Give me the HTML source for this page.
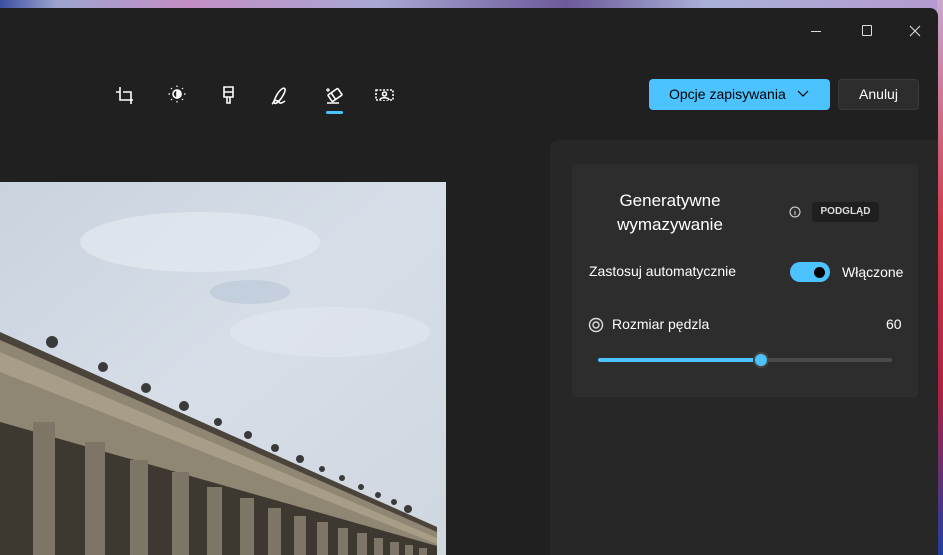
<!DOCTYPE html>
<html><head><meta charset="utf-8"><style>
*{margin:0;padding:0;box-sizing:border-box}
body{width:943px;height:555px;overflow:hidden;position:relative;font-family:"Segoe UI","Liberation Sans",sans-serif;background:#8f8fb8}
.wall{position:absolute;inset:0;background:linear-gradient(90deg,#3c4fa0 0,#9ea4d0 6%,#c38ec4 20%,#a9a8d4 40%,#6d5a9a 60%,#aab1d8 75%,#b49ad0 100%)}
.strip{position:absolute;right:0;top:0;width:6px;height:555px;background:linear-gradient(#c9a8d0,#d23a4a 40%,#b02040 70%,#2040a0)}
.win{position:absolute;left:0;top:8px;width:938px;height:547px;background:#202020;border-top-right-radius:8px;overflow:hidden}
.tb{position:absolute;color:#fff}
.panel{position:absolute;left:550px;top:132px;width:390px;height:420px;background:#272727;border-radius:8px 0 0 0}
.card{position:absolute;left:22px;top:24px;width:346px;height:233px;background:#2d2d2d;border-radius:4px}
.t{position:absolute;color:#fff;font-size:14px}
</style></head><body>
<div class="wall"></div><div class="strip"></div>
<div class="win">
 <div class="tb" style="left:811px;top:23px;width:10px;height:1px;background:#ddd"></div>
 <div class="tb" style="left:862px;top:17px;width:10px;height:11px;border:1px solid #ddd;border-radius:1px"></div>
 <svg class="tb" style="left:909px;top:17px" width="12" height="12"><path d="M1 1L11 11M11 1L1 11" stroke="#ddd" stroke-width="1.1"/></svg>
 <svg style="position:absolute;left:110px;top:74px" width="300" height="40" fill="none" stroke="#fff" stroke-width="1.6">
  <path d="M10 5v13h13M13 10h8v12M6 10h4"/>
  <g transform="translate(67,12)"><circle cx="0" cy="0" r="4"/><path d="M0 -4a4 4 0 0 1 0 8z" fill="#fff"/><path d="M-7 0h-1.5M7 0h1.5M0-7v-1.5M0 7v1.5M-5-5l-1-1M5 5l1 1M5-5l1-1M-5 5l-1 1" stroke-width="1.2"/></g>
  <path d="M114 5h9v10h-9zM114 10h9M117 15v6h3v-6"/>
  <path d="M162 22c2-1 3-7 6-11s6-6 7-4-3 9-6 12-5 3-5 1 4-2 5 0 3 1 6-1"/>
  <g transform="translate(225,13) rotate(-35)"><rect x="-6" y="-4" width="12" height="8" rx="1"/><path d="M-2-4v8"/></g>
  <path d="M217 21h12"/><path d="M218 6v4M216 8h4" stroke-width="1.2"/>
  <path d="M266 8h17v10h-17z" stroke-dasharray="2 1.5"/><circle cx="274.5" cy="12" r="2" fill="#202020"/><path d="M270 18c0-3 9-3 9 0" fill="#202020"/>
 </svg>
 <div style="position:absolute;left:326px;top:103px;width:17px;height:3px;border-radius:2px;background:#4cc2ff"></div>
 <div style="position:absolute;left:649px;top:71px;width:181px;height:31px;background:#4cc2ff;border-radius:4px;color:#000;font-size:14px;line-height:31px;padding-left:20px">Opcje zapisywania
  <svg style="position:absolute;left:148px;top:11px" width="12" height="8"><path d="M1 1l5 5 5-5" stroke="#000" fill="none" stroke-width="1.2"/></svg></div>
 <div style="position:absolute;left:838px;top:71px;width:81px;height:31px;background:#2d2d2d;border:1px solid #3a3a3a;border-radius:4px;color:#fff;font-size:14px;line-height:29px;text-align:center">Anuluj</div>
 <svg style="position:absolute;left:0;top:174px" width="446" height="373">
  <defs><linearGradient id="sky" x1="0" y1="0" x2="1" y2="1"><stop offset="0" stop-color="#c9d3de"/><stop offset=".5" stop-color="#d7dee8"/><stop offset="1" stop-color="#cfd6de"/></linearGradient></defs>
  <rect width="446" height="373" fill="url(#sky)"/>
  <ellipse cx="200" cy="60" rx="120" ry="30" fill="#e4e9f0" opacity=".7"/>
  <ellipse cx="330" cy="150" rx="100" ry="25" fill="#e2e7ee" opacity=".6"/>
  <ellipse cx="250" cy="110" rx="40" ry="12" fill="#b4c2d4" opacity=".5"/>
  <polygon points="0,150 437,345 437,373 0,373" fill="#4a443a"/>
  <polygon points="0,158 437,350 437,366 0,240" fill="#8f8674"/>
  <polygon points="0,170 437,356 437,362 0,190" fill="#a89d86"/>
  <polygon points="0,240 437,364 437,373 0,373" fill="#3d3830"/>
  <g fill="#7d7666">
   <rect x="33" y="240" width="22" height="140"/><rect x="85" y="260" width="20" height="120"/><rect x="130" y="278" width="18" height="100"/>
   <rect x="172" y="290" width="17" height="90"/><rect x="207" y="305" width="15" height="80"/><rect x="240" y="316" width="14" height="60"/>
   <rect x="268" y="326" width="13" height="50"/><rect x="294" y="334" width="12" height="50"/><rect x="317" y="340" width="11" height="40"/>
   <rect x="338" y="346" width="10" height="30"/><rect x="357" y="351" width="10" height="30"/><rect x="374" y="356" width="9" height="30"/>
   <rect x="390" y="360" width="9" height="30"/><rect x="405" y="363" width="8" height="20"/><rect x="419" y="366" width="8" height="20"/>
  </g>
  <g fill="#3a3a3a"><circle cx="52" cy="160" r="6"/><circle cx="103" cy="185" r="5"/><circle cx="146" cy="206" r="5"/><circle cx="184" cy="224" r="5"/><circle cx="218" cy="240" r="4"/><circle cx="248" cy="253" r="4"/><circle cx="275" cy="266" r="4"/><circle cx="300" cy="277" r="4"/><circle cx="322" cy="287" r="3"/><circle cx="342" cy="296" r="3"/><circle cx="361" cy="305" r="3"/><circle cx="378" cy="313" r="3"/><circle cx="394" cy="320" r="3"/><circle cx="408" cy="327" r="4"/></g>
 </svg>
 <div class="panel"><div class="card">
  <div class="t" style="left:34px;top:25px;width:128px;text-align:center;font-size:17px;line-height:24px">Generatywne wymazywanie</div>
  <svg style="position:absolute;left:217px;top:42px" width="12" height="12"><circle cx="6" cy="6" r="5" stroke="#ddd" fill="none"/><path d="M6 5v4M6 3.2v.3" stroke="#ddd"/></svg>
  <div style="position:absolute;left:240px;top:38px;width:67px;height:20px;background:#1f1f1f;border-radius:3px;color:#ddd;font-size:10px;font-weight:bold;line-height:20px;text-align:center">PODGLĄD</div>
  <div class="t" style="left:17px;top:99px;font-size:14px">Zastosuj automatycznie</div>
  <div style="position:absolute;left:218px;top:98px;width:40px;height:20px;border-radius:10px;background:#4cc2ff"><div style="position:absolute;left:24px;top:5px;width:11px;height:11px;border-radius:50%;background:#000"></div></div>
  <div class="t" style="left:270px;top:100px;font-size:14px">Włączone</div>
  <svg style="position:absolute;left:16px;top:153px" width="16" height="16" fill="none" stroke="#ddd" stroke-width="1.4"><circle cx="8" cy="8" r="6.5"/><circle cx="8" cy="8" r="3"/></svg>
  <div class="t" style="left:40px;top:152px;font-size:14px">Rozmiar pędzla</div>
  <div class="t" style="left:314px;top:152px;font-size:14px">60</div>
  <div style="position:absolute;left:26px;top:194px;width:294px;height:4px;border-radius:2px;background:#4a4a4a"></div>
  <div style="position:absolute;left:26px;top:194px;width:162px;height:4px;border-radius:2px;background:#4cc2ff"></div>
  <div style="position:absolute;left:181px;top:188px;width:16px;height:16px;border-radius:50%;background:#4cc2ff;border:2px solid #454545"></div>
 </div></div>
</div>
</body></html>
